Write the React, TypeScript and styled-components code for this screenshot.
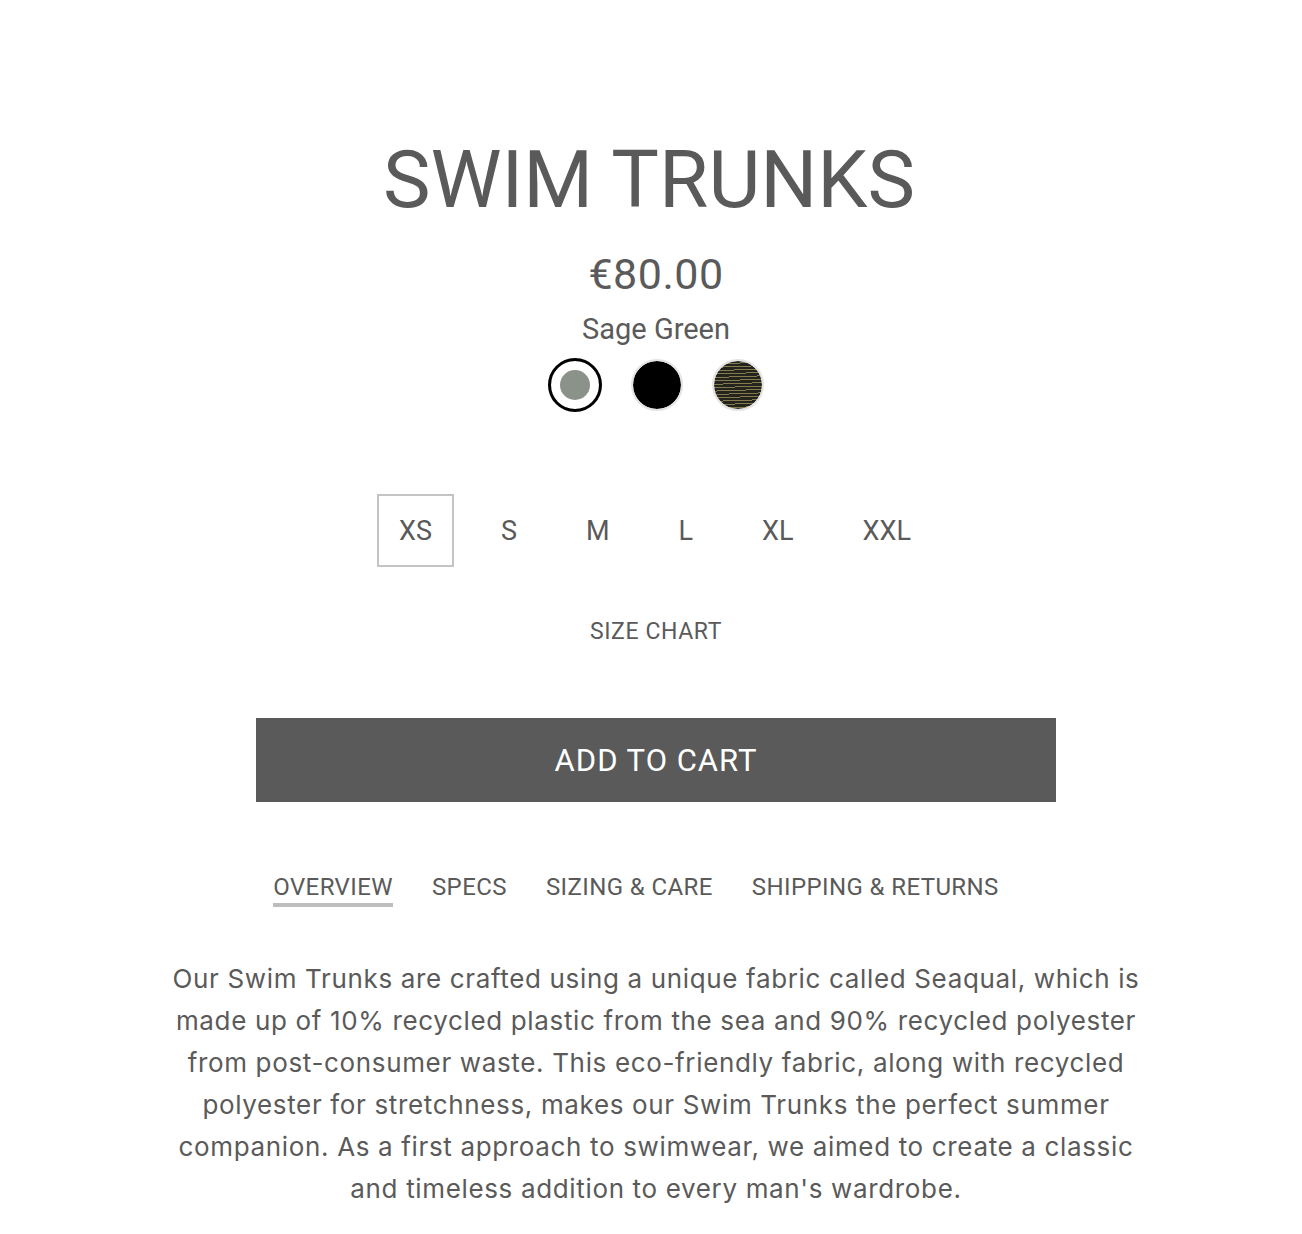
import React, { useState } from "react";
import styled, { createGlobalStyle } from "styled-components";

const Global = createGlobalStyle`
  html, body { margin: 0; padding: 0; background: #fff; }
  body { font-family: Roboto, "Liberation Sans", sans-serif; color: #5a5a5a; }
  * { box-sizing: border-box; }
`;

const Page = styled.main`
  display: flex;
  flex-direction: column;
  align-items: center;
  padding-top: 130px;
  padding-left: 10px;
`;

const Title = styled.h1`
  margin: 0 14px 0 0;
  font-size: 80px;
  font-weight: 400;
  line-height: 100px;
  color: #5a5a5a;
`;

const Price = styled.div`
  margin-top: 19px;
  font-size: 43px;
  line-height: 50px;
  letter-spacing: 0.5px;
`;

const ColorName = styled.div`
  margin-top: 11px;
  font-size: 29px;
  line-height: 38px;
`;

const Swatches = styled.div`
  margin-top: 10px;
  display: flex;
  align-items: center;
  gap: 29px;
`;

const Swatch = styled.button<{ $bg: string; $selected?: boolean }>`
  width: ${(p) => (p.$selected ? "54px" : "52px")};
  height: ${(p) => (p.$selected ? "54px" : "52px")};
  border-radius: 50%;
  padding: 0;
  cursor: pointer;
  background: ${(p) => p.$bg};
  border: ${(p) => (p.$selected ? "3px solid #000" : "2px solid #e4e4e4")};
  box-shadow: ${(p) => (p.$selected ? "inset 0 0 0 9px #fff" : "none")};
  background-clip: padding-box;
`;

const Sizes = styled.div`
  margin-top: 82px;
  margin-left: -2px;
  display: flex;
  gap: 25px;
`;

const SizeBtn = styled.button<{ $selected?: boolean }>`
  height: 73px;
  padding: 0 20px;
  min-width: 58px;
  background: #fff;
  border: 2px solid ${(p) => (p.$selected ? "#c4c4c4" : "transparent")};
  font-family: inherit;
  font-size: 27px;
  color: #5a5a5a;
  cursor: pointer;
`;

const SizeChart = styled.a`
  margin-top: 50px;
  font-size: 23px;
  line-height: 30px;
  letter-spacing: 0.6px;
  color: #5a5a5a;
  text-decoration: none;
`;

const AddToCart = styled.button`
  margin-top: 71px;
  width: 800px;
  height: 84px;
  border: none;
  background: #5a5a5a;
  color: #fff;
  font-family: inherit;
  font-size: 31px;
  letter-spacing: 1px;
  cursor: pointer;
`;

const Tabs = styled.nav`
  margin-top: 70px;
  display: flex;
  gap: 39px;
  margin-left: -40px;
`;

const Tab = styled.button<{ $active?: boolean }>`
  background: none;
  border: none;
  padding: 0 0 1px;
  font-family: inherit;
  font-size: 24px;
  line-height: 30px;
  letter-spacing: 0.4px;
  color: #5a5a5a;
  border-bottom: 4px solid ${(p) => (p.$active ? "#bdbdbd" : "transparent")};
  cursor: pointer;
`;

const Body = styled.p`
  margin: 51px 0 0;
  width: 985px;
  text-align: center;
  font-family: Inter, Roboto, sans-serif;
  font-size: 26px;
  letter-spacing: 0.65px;
  line-height: 42px;
`;

const swatches = [
  { name: "Sage Green", bg: "#8b9289" },
  { name: "Black", bg: "#000" },
  {
    name: "Stripe",
    bg: "repeating-linear-gradient(178deg, #24241f 0px, #24241f 2.4px, #857a4c 2.4px, #857a4c 3.4px)",
  },
];

const sizes = ["XS", "S", "M", "L", "XL", "XXL"];
const tabs = ["OVERVIEW", "SPECS", "SIZING & CARE", "SHIPPING & RETURNS"];

export default function App() {
  const [color, setColor] = useState(0);
  const [size, setSize] = useState(0);
  const [tab, setTab] = useState(0);
  return (
    <Page>
      <Global />
      <Title>SWIM TRUNKS</Title>
      <Price>€80.00</Price>
      <ColorName>{swatches[color].name}</ColorName>
      <Swatches>
        {swatches.map((s, i) => (
          <Swatch key={s.name} $bg={s.bg} $selected={i === color} onClick={() => setColor(i)} aria-label={s.name} />
        ))}
      </Swatches>
      <Sizes>
        {sizes.map((s, i) => (
          <SizeBtn key={s} $selected={i === size} onClick={() => setSize(i)}>
            {s}
          </SizeBtn>
        ))}
      </Sizes>
      <SizeChart href="#">SIZE CHART</SizeChart>
      <AddToCart>ADD TO CART</AddToCart>
      <Tabs>
        {tabs.map((t, i) => (
          <Tab key={t} $active={i === tab} onClick={() => setTab(i)}>
            {t}
          </Tab>
        ))}
      </Tabs>
      <Body>
        Our Swim Trunks are crafted using a unique fabric called Seaqual, which is made up of 10% recycled plastic
        from the sea and 90% recycled polyester from post-consumer waste. This eco-friendly fabric, along with
        recycled polyester for stretchness, makes our Swim Trunks the perfect summer companion. As a first approach
        to swimwear, we aimed to create a classic and timeless addition to every man's wardrobe.
      </Body>
    </Page>
  );
}
